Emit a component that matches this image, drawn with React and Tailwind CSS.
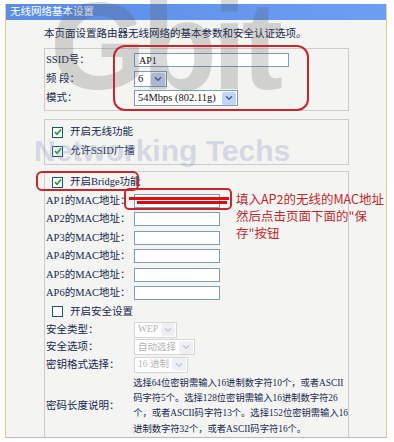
const FONT = { fontFamily: '"Liberation Serif", "Noto Sans CJK SC", serif' };

const Arrow = ({ disabled }) => (
  <span
    className={`flex h-[13px] w-[14px] shrink-0 items-center justify-center rounded-[2px] ${
      disabled ? "bg-[#eef0f4]" : "bg-[#c3d4fa]"
    }`}
  >
    <svg width="8" height="6" viewBox="0 0 8 6">
      <path
        d="M1 1.2 L4 4.2 L7 1.2"
        fill="none"
        stroke={disabled ? "#c4c9d4" : "#4d6185"}
        strokeWidth="1.6"
      />
    </svg>
  </span>
);

const Select = ({ value, width, disabled }) => (
  <div
    className={`flex h-[16px] items-center justify-between gap-[3px] border bg-white pl-[3px] pr-[1px] ${
      disabled ? "border-[#d6d6d6] text-[9.5px] text-[#b5b5b5]" : "border-[#7f9db9] text-[10.5px] text-[#111]"
    }`}
    style={{ minWidth: width }}
  >
    <span className="whitespace-nowrap leading-none">{value}</span>
    <Arrow disabled={disabled} />
  </div>
);

const Check = ({ checked }) => (
  <span className="flex h-[11px] w-[11px] items-center justify-center border border-[#1c5180] bg-white">
    {checked && (
      <svg width="8" height="8" viewBox="0 0 8 8">
        <path d="M1 4 L3 6.2 L7 1.5" fill="none" stroke="#21a121" strokeWidth="1.7" />
      </svg>
    )}
  </span>
);

const Row = ({ label, children, h = "h-[19px]" }) => (
  <div className={`flex items-center ${h}`}>
    <span className="w-[89px] whitespace-nowrap pl-[1px] text-[10.5px] text-[#142850]">{label}</span>
    {children}
  </div>
);

const CheckRow = ({ label, checked }) => (
  <div className="flex h-[19px] items-center gap-[7px] pl-[7px]">
    <Check checked={checked} />
    <span className="text-[10.5px] text-[#142850]">{label}</span>
  </div>
);

const MacInput = ({ filled }) => (
  <div className="relative h-[14px] w-[86px] border border-[#7f9db9] bg-white">
    {filled && (
      <>
        <div className="absolute left-[-6px] right-[-10px] top-[2px] h-[3px] bg-[#e01010]" />
        <div className="absolute left-[2px] right-[-8px] top-[6px] h-[3px] bg-[#d80c0c]" />
      </>
    )}
  </div>
);

const descLines = [
  "选择64位密钥需输入16进制数字符10个，或者ASCII",
  "码字符5个。选择128位密钥需输入16进制数字符26",
  "个，或者ASCII码字符13个。选择152位密钥需输入16",
  "进制数字符32个，或者ASCII码字符16个。",
];

export default function App() {
  return (
    <div className="relative h-[442px] w-[394px] overflow-hidden bg-white" style={FONT}>
      <div className="ml-[5px] mt-[4px] flex h-[434px] w-[382px] flex-col border-x border-b border-x-[#e9c98f] border-b-[#b8b8b8]">
        <div className="flex h-[18px] items-center bg-gradient-to-r from-[#5b8ce6] to-[#6c9ff2] pl-[4px] text-[10.5px] text-white">
          无线网络基本设置
        </div>
        <div className="flex flex-1 flex-col bg-[#f4f4f2] pl-[38px] pr-[37px]">
          <div className="flex h-[28px] items-center text-[10.5px] text-[#142850]">
            本页面设置路由器无线网络的基本参数和安全认证选项。
          </div>

          <div className="border border-[#cccccc] py-[2px]">
            <Row label="SSID号：">
              <div className="flex h-[14px] w-[155px] items-center border border-[#7f9db9] bg-white pl-[4px] text-[10px] text-[#111]">
                AP1
              </div>
            </Row>
            <Row label="频 段：">
              <Select value="6" width="33px" />
            </Row>
            <Row label="模式：">
              <Select value="54Mbps (802.11g)" width="104px" />
            </Row>
          </div>

          <div className="mt-[8px] border border-[#cccccc] py-[3px]">
            <CheckRow label="开启无线功能" checked />
            <CheckRow label="允许SSID广播" checked />
          </div>

          <div className="mt-[6px] flex-1 border-x border-t border-[#cccccc] pt-[1px]">
            <CheckRow label="开启Bridge功能" checked />
            <div className="flex flex-col">
              {[1, 2, 3, 4, 5, 6].map((n) => (
                <Row key={n} label={`AP${n}的MAC地址：`} h="h-[18.4px]">
                  <MacInput filled={n === 1} />
                </Row>
              ))}
            </div>
            <CheckRow label="开启安全设置" />
            <Row label="安全类型：" h="h-[17.5px]">
              <Select value="WEP" width="31px" disabled />
            </Row>
            <Row label="安全选项：" h="h-[17.5px]">
              <Select value="自动选择" width="56px" disabled />
            </Row>
            <Row label="密钥格式选择：" h="h-[17.5px]">
              <Select value="16 进制" width="50px" disabled />
            </Row>
            <div className="flex items-center">
              <span className="w-[89px] pl-[1px] text-[10.5px] text-[#142850]">密码长度说明：</span>
              <div className="pt-[2px] text-[9.3px] leading-[15.4px] text-[#142850]">
                {descLines.map((l) => (
                  <div key={l} className="whitespace-nowrap">
                    {l}
                  </div>
                ))}
              </div>
            </div>
          </div>
        </div>
      </div>

      {/* watermark */}
      <div
        className="pointer-events-none absolute left-[50px] top-[-16px] text-[124px] font-bold leading-none tracking-[-5px] text-[#555] opacity-[0.22]"
        style={{ fontFamily: '"Liberation Sans", sans-serif' }}
      >
        Gbit
      </div>
      <div
        className="pointer-events-none absolute left-[34px] top-[136px] whitespace-nowrap text-[30px] font-bold leading-none text-[#8d9ac0] opacity-[0.3]"
        style={{ fontFamily: '"Liberation Sans", sans-serif' }}
      >
        Networking Techs
      </div>

      {/* annotations */}
      <div className="pointer-events-none absolute left-[113px] top-[45px] h-[66px] w-[196px] rounded-[12px] border-2 border-[#c8262c]" />
      <div className="pointer-events-none absolute left-[36px] top-[171px] h-[20px] w-[103px] rounded-[6px] border-2 border-[#c8262c]" />
      <div className="pointer-events-none absolute left-[124px] top-[188px] h-[22px] w-[108px] rounded-[5px] border-2 border-[#c8262c]" />
      <div
        className="pointer-events-none absolute left-[236px] top-[190px] whitespace-nowrap text-[12.5px] leading-[17px] text-[#c0282c]"
        style={{ fontFamily: '"Noto Sans CJK SC", sans-serif' }}
      >
        <div>填入AP2的无线的MAC地址</div>
        <div>然后点击页面下面的"保</div>
        <div>存"按钮</div>
      </div>
    </div>
  );
}
